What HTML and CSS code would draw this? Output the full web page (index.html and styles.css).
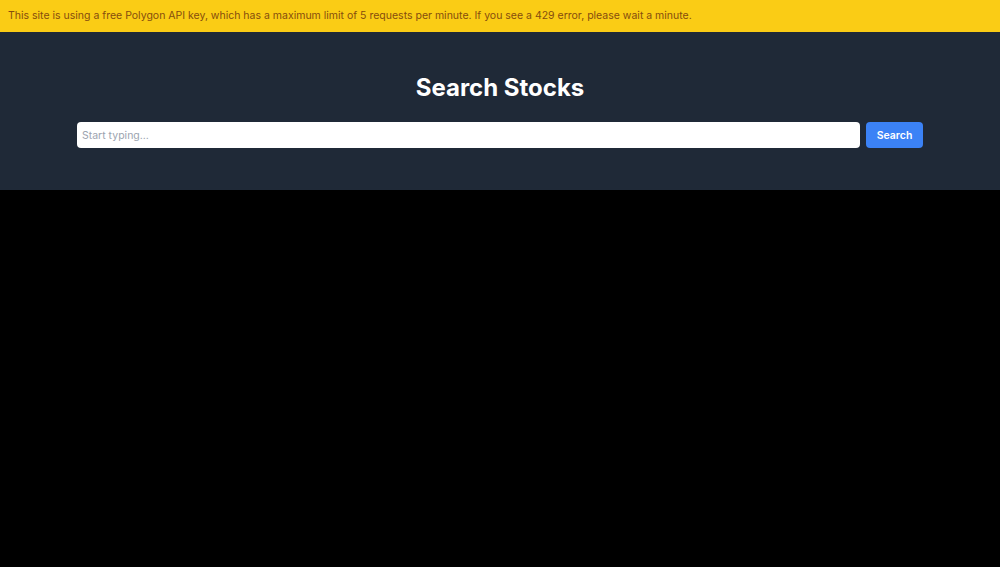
FILE: index.html
```html
<!DOCTYPE html>
<html lang="en">
<head>
<meta charset="utf-8">
<title>Search Stocks</title>
<link rel="stylesheet" href="styles.css">
</head>
<body>
<div class="banner">This site is using a free Polygon API key, which has a maximum limit of 5 requests per minute. If you see a 429 error, please wait a minute.</div>
<header class="hero">
  <div class="container">
    <h1 class="title">Search Stocks</h1>
    <form class="search" onsubmit="return false">
      <input class="search-input" type="text" placeholder="Start typing...">
      <button class="search-btn" type="submit">Search</button>
    </form>
  </div>
</header>
</body>
</html>
```
FILE: styles.css
```css
* { box-sizing: border-box; }
html, body { margin: 0; padding: 0; background: #000; height: 100%; }
body { font-family: Inter, "Noto Sans", sans-serif; }
.banner {
  background: #facc15;
  color: #854d0e;
  font-size: 10.5px;
  line-height: 16px;
  padding: 8px 8px;
  height: 32px;
}
.hero {
  background: #1f2937;
  padding: 40px 0 42px;
}
.container {
  max-width: 896px;
  margin: 0 auto;
  padding: 0 25px;
}
.title {
  margin: 0 0 18px;
  text-align: center;
  color: #fff;
  font-size: 24px;
  line-height: 32px;
  font-weight: 700;
}
.search { display: flex; gap: 6px; margin: 0; }
.search-input {
  flex: 1;
  height: 26px;
  border: 0;
  border-radius: 4px;
  background: #fff;
  padding: 0 5px;
  font-family: inherit;
  font-size: 10.5px;
  color: #111827;
  outline: none;
}
.search-input::placeholder { color: #9ca3af; }
.search-btn {
  height: 26px;
  width: 57px;
  border: 0;
  border-radius: 4px;
  background: #3b82f6;
  color: #fff;
  font-family: inherit;
  font-size: 10.5px;
  font-weight: 600;
  padding: 0;
}
```
